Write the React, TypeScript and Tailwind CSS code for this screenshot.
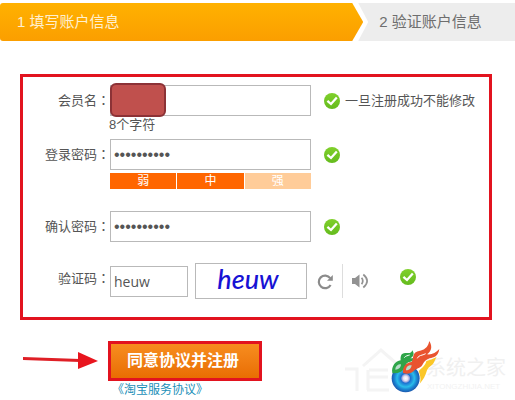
import React from "react";

const labelClass = "w-[87px] shrink-0 self-start text-right leading-[30px]";
const fieldClass =
  "h-[31px] border border-[#b9b9b9] bg-white pl-[3px] text-[#555] outline-none";

function Colon() {
  return <span className="font-['Noto_Sans_CJK_TC',sans-serif]">：</span>;
}

function Check() {
  return (
    <svg width="16" height="16" viewBox="0 0 16 16" className="shrink-0" role="img" aria-label="ok">
      <defs>
        <linearGradient id="ok" x1="0" y1="0" x2="0" y2="1">
          <stop offset="0" stopColor="#80d02c" />
          <stop offset="1" stopColor="#64bb1d" />
        </linearGradient>
      </defs>
      <circle cx="8" cy="8" r="8" fill="url(#ok)" />
      <path d="M3.4 7.8 L7 11 L12.8 4.6" fill="none" stroke="#fff" strokeWidth="2.3" />
    </svg>
  );
}

function Steps() {
  return (
    <ol className="mt-[3px] flex h-[38px] bg-[#ededed] text-[15px] leading-[38px]">
      <li className="w-[71.5%] bg-white [clip-path:polygon(0_0,calc(100%-10px)_0,100%_50%,calc(100%-10px)_100%,0_100%)]">
        <div className="mr-[5px] rounded-l-[3px] bg-linear-to-b from-[#ffb100] to-[#fb9e00] pl-[17px] text-[#fff0cf] [clip-path:polygon(0_0,calc(100%-11px)_0,100%_50%,calc(100%-11px)_100%,0_100%)]">
          1 填写账户信息
        </div>
      </li>
      <li className="pl-[11px] text-[#6e6e6e]">2 验证账户信息</li>
    </ol>
  );
}

function Strength() {
  return (
    <div className="mt-[3px] ml-[87px] grid h-[16px] w-[201px] grid-cols-3 gap-px text-center text-[12px] leading-[16px] text-white">
      <span className="bg-[#ff6600]">弱</span>
      <span className="bg-[#ff6600]">中</span>
      <span className="bg-[#ffcc99]">强</span>
    </div>
  );
}

function Arrow() {
  return (
    <svg width="75" height="18" viewBox="0 0 75 18" aria-hidden="true">
      <path d="M0 6 L57 8 L57 11 L0 9 Z" fill="#df1f26" />
      <path d="M55 1 L75 10 L55 18 Z" fill="#e8151e" />
    </svg>
  );
}

function Brand() {
  return (
    <div className="relative mt-[-6px] h-[62px] w-[172px] overflow-hidden">
      <div className="absolute top-[21px] left-[83px] text-[20px] leading-[24px] text-[#f0f0f0]">
        系统之家
      </div>
      <div className="absolute top-[47px] left-[84px] text-[8px] leading-[10px] text-[#f2f2f2]">
        XITONGZHIJIA.NET
      </div>
      <svg className="absolute inset-0" width="172" height="62" viewBox="0 0 172 62" aria-hidden="true">
        <defs>
          <radialGradient id="disc">
            <stop offset="0" stopColor="#ffffff" />
            <stop offset=".16" stopColor="#e8e2f2" />
            <stop offset=".28" stopColor="#8f9fdc" />
            <stop offset=".34" stopColor="#1c6fd0" />
            <stop offset=".62" stopColor="#2bbdea" />
            <stop offset=".8" stopColor="#1b86d2" />
            <stop offset="1" stopColor="#1c58ae" />
          </radialGradient>
        </defs>
        <path d="M2 34 H14 V56 M20 31 L38 15 L54 29 M26 35 H45 M26 42 H45 M25 35 V55 M24 55 H46" fill="none" stroke="#f4f4f4" strokeWidth="3" />
        <g transform="translate(42 0) scale(.3333)">
          <circle cx="62" cy="130" r="42" fill="url(#disc)" />
          <path d="M104 146 C110 132 104 118 101 108 C112 98 122 90 124 78 C134 76 144 72 155 66 C148 76 148 86 138 92 C132 96 130 98 126 106 C122 122 114 136 104 146 Z" fill="#fbc728" />
          <path d="M22 114 C18 94 32 78 47 76 C46 64 48 52 64 54 C73 55 80 54 82 46 C90 58 84 66 76 70 C84 70 88 68 94 64 C86 80 78 80 70 82 C64 86 60 90 58 100 C50 114 34 116 22 114 Z" fill="#2fa549" />
          <path d="M54 114 C52 96 64 82 80 81 C86 73 82 58 92 52 C104 44 126 50 133 18 C144 36 138 50 126 58 C140 60 152 54 163 42 C160 64 146 68 134 70 C122 74 116 82 112 90 C106 101 92 100 86 108 C78 117 64 118 54 114 Z" fill="#e9542f" />
          <path d="M31 104 C31 94 38 88 48 88 C48 98 40 104 31 104 Z M63 106 C63 96 70 90 80 91 C79 100 72 106 63 106 Z" fill="#b9dccb" />
          <path d="M58 68 C62 62 68 62 74 60 M97 70 C100 60 112 62 122 56" fill="none" stroke="#fff" strokeWidth="3" />
        </g>
      </svg>
    </div>
  );
}

export default function App() {
  return (
    <main className="overflow-hidden bg-white font-['Liberation_Sans','Noto_Sans_CJK_SC',sans-serif] text-[13px] text-[#555]">
      <Steps />
      <form onSubmit={(e) => e.preventDefault()}>
        <section className="mt-[33px] mr-[23px] ml-5 border-3 border-[#e2131f] pt-2 pb-[18px]">
          <div className="flex h-[31px] items-center">
            <label htmlFor="member" className={labelClass}>会员名<Colon /></label>
            <div className="relative">
              <input id="member" className={`${fieldClass} block w-[201px] text-[13px]`} />
              <div className="absolute top-[-2px] left-0 h-[34px] w-[56px] rounded-[6px] border-2 border-[#8c3236] bg-[#c0504d]" />
            </div>
            <div className="ml-[13px] flex items-center gap-[5px]">
              <Check />
              <span className="whitespace-nowrap">一旦注册成功不能修改</span>
            </div>
          </div>
          <p className="ml-[86px] h-[23px] leading-[18px]">8个字符</p>

          <div className="flex h-[31px] items-center">
            <label htmlFor="password" className={labelClass}>登录密码<Colon /></label>
            <input id="password" type="password" autoComplete="off" defaultValue="heuw123456" className={`${fieldClass} mr-[13px] w-[201px] text-[16px]`} />
            <Check />
          </div>
          <Strength />

          <div className="mt-[22px] flex h-[31px] items-center">
            <label htmlFor="confirm" className={labelClass}>确认密码<Colon /></label>
            <input id="confirm" type="password" autoComplete="off" defaultValue="heuw123456" className={`${fieldClass} mr-[13px] w-[201px] text-[16px]`} />
            <Check />
          </div>

          <div className="mt-[21px] flex h-[36px] items-center">
            <label htmlFor="code" className={labelClass}>验证码<Colon /></label>
            <input id="code" defaultValue="heuw" className={`${fieldClass} w-[78px] font-['Open_Sans',sans-serif] text-[14px]`} />
            <div className="ml-[7px] h-[36px] w-[112px] border border-[#b9b9b9] pr-[6px] text-center font-['Lato',sans-serif] text-[27px] leading-[30px] font-medium text-[#1712d4] italic">
              heuw
            </div>
            <button type="button" aria-label="refresh" className="ml-[10px]">
              <svg width="17" height="17" viewBox="0 0 17 17" className="block">
                <path d="M13.2 5.2 A6.3 6.3 0 1 0 13.6 12" fill="none" stroke="#8b8b8b" strokeWidth="2.2" />
                <path d="M15.8 2 V7.8 H10 Z" fill="#8b8b8b" />
              </svg>
            </button>
            <div className="ml-2 h-[34px] border-l border-[#ddd]" />
            <button type="button" aria-label="audio" className="ml-[9px]">
              <svg width="17" height="16" viewBox="0 0 17 16" className="block">
                <path d="M0 5 H3 L7.5 1.5 V14.5 L3 11 H0 Z" fill="#929292" />
                <path d="M9.6 4.8 Q12 8 9.6 11.2 M11.3 1.5 Q19 8 11.3 14.5" fill="none" stroke="#929292" strokeWidth="1.7" />
              </svg>
            </button>
            <div className="mb-2 ml-[31px]"><Check /></div>
          </div>
        </section>

        <div className="mt-[21px] flex items-start pl-[23px]">
          <div className="mt-[10px]"><Arrow /></div>
          <div className="ml-[10px]">
            <button type="submit" className="block h-[40px] w-[154px] border-3 border-[#e2131f] bg-linear-to-b from-[#f78d1e] to-[#e96d02] pr-1 text-[16px] font-bold text-white">
              同意协议并注册
            </button>
            <a href="#terms" className="block pl-1 text-[12px] leading-[18px] text-[#1b8fb8]">《淘宝服务协议》</a>
          </div>
          <div className="ml-auto"><Brand /></div>
        </div>
      </form>
    </main>
  );
}
